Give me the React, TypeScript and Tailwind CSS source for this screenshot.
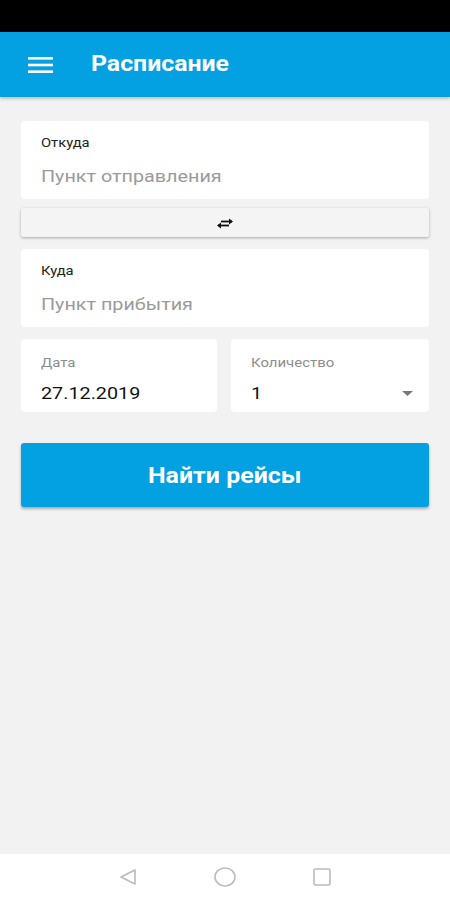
import React from "react";

const font = { fontFamily: "Roboto, 'Noto Sans', sans-serif" };

// the screenshot is stretched horizontally a bit, so text gets a scale-x
const TextCard = ({ label, placeholder }: { label: string; placeholder: string }) => (
  <div className="bg-white rounded-[4px] h-[78px] px-5 pt-[15px]">
    <div className="text-[12.8px] leading-[14px] text-[#222]">
      <span className="inline-block origin-left scale-x-[1.15]">{label}</span>
    </div>
    <div className="text-[17.2px] leading-[20px] text-[#9a9a9a] mt-[16px]">
      <span className="inline-block origin-left scale-x-[1.15]">{placeholder}</span>
    </div>
  </div>
);

export default function App() {
  return (
    <div className="w-[450px] h-[900px] flex flex-col bg-[#f2f2f2]" style={font}>
      {/* status bar */}
      <div className="h-[32px] bg-black" />

      {/* app bar */}
      <div className="h-[65px] bg-[#03a0e2] flex items-center shadow-[0_2px_3px_rgba(0,0,0,0.2)] z-10">
        <svg className="ml-[28px]" width="25" height="16" viewBox="0 0 25 16">
          <rect x="0" y="0" width="25" height="2.6" fill="white" />
          <rect x="0" y="6.7" width="25" height="2.6" fill="white" />
          <rect x="0" y="13.4" width="25" height="2.6" fill="white" />
        </svg>
        <span className="ml-[38px] inline-block origin-left scale-x-[1.15] text-white text-[21.6px] font-bold">
          Расписание
        </span>
      </div>

      {/* form */}
      <div className="flex-1 px-[21px] pt-[24px] flex flex-col">
        <TextCard label="Откуда" placeholder="Пункт отправления" />

        <div className="mt-[9px] h-[29px] bg-[#f4f4f4] rounded-[2px] shadow-[0_1px_3px_rgba(0,0,0,0.3)] flex items-center justify-center">
          <svg width="18" height="14" viewBox="0 0 18 14">
            <path d="M5 5.5h11" stroke="#111" strokeWidth="1.8" />
            <path d="M13 2.5l4 3-4 3z" fill="#111" />
            <path d="M13 9.5H2" stroke="#111" strokeWidth="1.8" />
            <path d="M5 6.5l-4 3 4 3z" fill="#111" />
          </svg>
        </div>

        <div className="mt-[12px]">
          <TextCard label="Куда" placeholder="Пункт прибытия" />
        </div>

        <div className="mt-[12px] flex gap-[14px]">
          <div className="flex-1 bg-white rounded-[4px] h-[73px] px-5 pt-[16px]">
            <div className="text-[13px] leading-[15px] text-[#8e8e8e]">
              <span className="inline-block origin-left scale-x-[1.15]">Дата</span>
            </div>
            <div className="text-[17.2px] leading-[22px] text-[#111] mt-[12px]">
              <span className="inline-block origin-left scale-x-[1.15]">27.12.2019</span>
            </div>
          </div>
          <div className="w-[198px] bg-white rounded-[4px] h-[73px] pl-5 pr-4 pt-[16px]">
            <div className="text-[13px] leading-[15px] text-[#8e8e8e]">
              <span className="inline-block origin-left scale-x-[1.15]">Количество</span>
            </div>
            <div className="flex items-center justify-between mt-[12px]">
              <span className="inline-block origin-left scale-x-[1.15] text-[17.2px] leading-[22px] text-[#111]">1</span>
              <svg width="11" height="5" viewBox="0 0 11 5">
                <path d="M0 0h11L5.5 5z" fill="#777" />
              </svg>
            </div>
          </div>
        </div>

        <button className="mt-[31px] h-[64px] bg-[#03a0e2] rounded-[3px] shadow-[0_2px_3px_rgba(0,0,0,0.3)] text-white text-[21.7px] font-bold pt-[2px]">
          <span className="inline-block scale-x-[1.15]">Найти рейсы</span>
        </button>
      </div>

      {/* nav bar */}
      <div className="h-[46px] bg-white flex items-center justify-center gap-[76px]">
        <svg width="20" height="20" viewBox="0 0 20 20">
          <path d="M17 3v14L3 10z" fill="none" stroke="#bbb" strokeWidth="1.6" strokeLinejoin="round" />
        </svg>
        <svg width="22" height="22" viewBox="0 0 22 22">
          <ellipse cx="11" cy="11" rx="10" ry="9" fill="none" stroke="#bbb" strokeWidth="1.6" />
        </svg>
        <svg width="20" height="20" viewBox="0 0 20 20">
          <rect x="2" y="2" width="16" height="16" rx="1.5" fill="none" stroke="#bbb" strokeWidth="1.6" />
        </svg>
      </div>
    </div>
  );
}
